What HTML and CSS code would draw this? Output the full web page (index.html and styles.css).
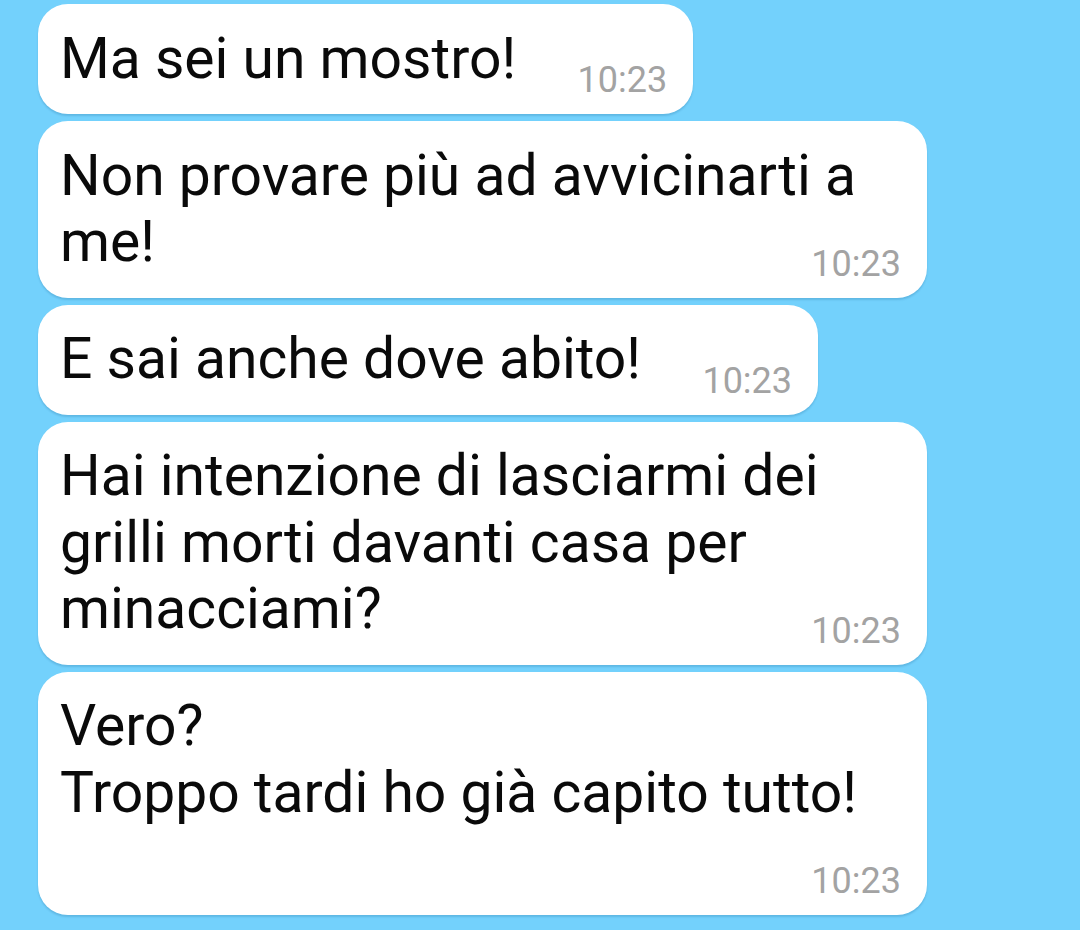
FILE: index.html
```html
<!DOCTYPE html>
<html lang="it">
    <head>
        <meta charset="UTF-8" />
        <meta name="viewport" content="width=device-width, initial-scale=1.0" />
        <title>Chat</title>
        <link rel="stylesheet" href="styles.css">
    </head>
    <body>
        <div class="chat">
            <div class="bubble">
                <p class="text">Ma sei un mostro!<span class="spacer"></span></p>
                <span class="time">10:23</span>
            </div>
            <div class="bubble">
                <p class="text">Non provare più ad avvicinarti a me!<span class="spacer"></span></p>
                <span class="time">10:23</span>
            </div>
            <div class="bubble">
                <p class="text">E sai anche dove abito!<span class="spacer"></span></p>
                <span class="time">10:23</span>
            </div>
            <div class="bubble">
                <p class="text">Hai intenzione di lasciarmi dei grilli morti davanti casa per minacciami?<span class="spacer"></span></p>
                <span class="time">10:23</span>
            </div>
            <div class="bubble">
                <p class="text">Vero?<br>Troppo tardi ho già capito tutto!<span class="spacer"></span></p>
                <span class="time">10:23</span>
            </div>
        </div>
    </body>
</html>
```

FILE: styles.css
```css
html {
    font-family: Roboto, "Liberation Sans", sans-serif;
}

body {
    margin: 0;
    background: #73d1fc;
    height: 930px;
    overflow: hidden;
}

.chat {
    display: flex;
    flex-direction: column;
    align-items: flex-start;
    gap: 7px;
    padding: 4px 0 0 38px;
}

.bubble {
    position: relative;
    max-width: 889px;
    box-sizing: border-box;
    padding: 21.5px 26px 22px 22px;
    background: #fff;
    border-radius: 30px;
    box-shadow: 0 2px 2px rgba(0, 70, 120, 0.18);
}

.text {
    margin: 0;
    font-size: 57px;
    line-height: 66.5px;
    color: #0a0a0a;
}

.spacer {
    display: inline-block;
    width: 151px;
}

.time {
    position: absolute;
    right: 26px;
    bottom: 13px;
    font-size: 36px;
    line-height: 42px;
    color: #a3a3a3;
}
```
